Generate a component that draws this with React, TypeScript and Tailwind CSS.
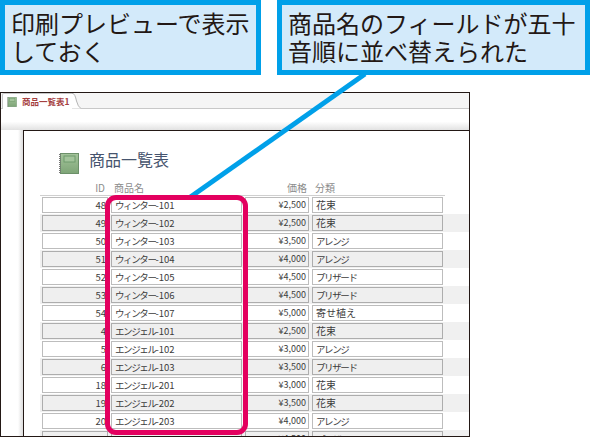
const jp = "font-['Noto_Sans_CJK_JP','Noto_Sans',sans-serif]";

const rows: [string, string, string, string, string][] = [
  ["48", "ウィンター", "-101", "¥2,500", "花束"],
  ["49", "ウィンター", "-102", "¥2,500", "花束"],
  ["50", "ウィンター", "-103", "¥3,500", "アレンジ"],
  ["51", "ウィンター", "-104", "¥4,000", "アレンジ"],
  ["52", "ウィンター", "-105", "¥4,500", "プリザード"],
  ["53", "ウィンター", "-106", "¥4,500", "プリザード"],
  ["54", "ウィンター", "-107", "¥5,000", "寄せ植え"],
  ["4", "エンジェル", "-101", "¥2,500", "花束"],
  ["5", "エンジェル", "-102", "¥3,000", "アレンジ"],
  ["6", "エンジェル", "-103", "¥3,500", "プリザード"],
  ["18", "エンジェル", "-201", "¥3,000", "花束"],
  ["19", "エンジェル", "-202", "¥3,500", "花束"],
  ["20", "エンジェル", "-203", "¥4,000", "アレンジ"],
  ["21", "エンジェル", "-204", "¥4,500", "プリザード"],
];

const Book = ({ className }: { className: string }) => (
  <svg viewBox="0 0 20 21" className={className}>
    <defs>
      <linearGradient id="cover" x1="0" y1="0" x2="0" y2="1">
        <stop offset="0" stopColor="#a4c49b" />
        <stop offset="1" stopColor="#7ea577" />
      </linearGradient>
    </defs>
    <rect x="1.5" y="0.5" width="18" height="20" fill="url(#cover)" stroke="#6c9069" />
    <rect x="5" y="3" width="11" height="6" fill="#a3c49b" stroke="#6f9a6c" />
    <path d="M1 1v19" stroke="#777" strokeWidth="2" strokeDasharray="1 1" />
  </svg>
);

const Callout = ({ lines, className }: { lines: string[]; className: string }) => (
  <div className={`h-[75px] border-[5px] border-[#00a0e9] bg-[#d3eafa] pl-[6px] pt-[4px] text-[24px] leading-[28px] text-[#231815] ${className}`}>
    {lines.map((line) => (
      <div key={line} className="whitespace-nowrap">
        {line}
      </div>
    ))}
  </div>
);

const Row = ({ row, striped }: { row: (typeof rows)[number]; striped: boolean }) => {
  const [id, kana, num, price, cat] = row;
  const box = striped
    ? "h-[16px] border border-[#adadad] bg-[#efefef]"
    : "h-[16px] border border-[#bdbdbd] bg-white";
  const kanaCat = cat !== "花束" && cat !== "寄せ植え";
  return (
    <div className={`flex h-[18px] shrink-0 gap-[3px] pl-[2px] pt-[1px] text-[9.5px] leading-[14px] text-[#3c3c3c] ${striped ? "bg-[#f0f0f0]" : ""}`}>
      <div className={`${box} w-[66px] pr-[1px] text-right`}>{id}</div>
      <div className={`${box} w-[131px] pl-[3px]`}>
        <span className="tracking-[-1.4px]">{kana}</span>
        {num}
      </div>
      <div className={`${box} w-[64px] pr-[2px] text-right text-[9px]`}>{price}</div>
      <div className={`${box} w-[131px] pl-[3px]`}>
        <span className={kanaCat ? "tracking-[-1.4px]" : "text-[10px]"}>{cat}</span>
      </div>
    </div>
  );
};

export default function App() {
  return (
    <div className={`relative h-[438px] w-[600px] overflow-hidden bg-white ${jp}`}>
      <div className="flex gap-[16px]">
        <Callout className="w-[261px]" lines={["印刷プレビューで表示", "しておく"]} />
        <Callout className="w-[313px]" lines={["商品名のフィールドが五十", "音順に並べ替えられた"]} />
      </div>

      <div className="mt-[17px] flex h-[345px] w-[470px] flex-col border border-[#231815]">
        <div className="flex h-[16px] shrink-0 border-b border-[#c8c8c8] bg-[#f5f5f5]">
          <div className="ml-[1px] flex h-[16px] w-[70px] items-center gap-[5px] rounded-tl-[2px] border-l border-t border-[#c8c8c8] bg-white pl-[4px]">
            <Book className="h-[10px] w-[10px]" />
            <span className="text-[8.5px] font-bold leading-none text-[#a5403f]">商品一覧表1</span>
          </div>
          <svg viewBox="0 0 9 16" className="h-[16px] w-[9px]">
            <path d="M0 0.5 H1 Q3 1 4.5 8 Q6 14 9 15.5 H0Z" fill="#fff" />
            <path d="M0 0.5 H1 Q3 1 4.5 8 Q6 14 9 15.5" fill="none" stroke="#b5b5b5" />
          </svg>
        </div>
        <div className="h-[21px] shrink-0 bg-gradient-to-b from-white from-60% to-[#e2e2e2]" />

        <div className="flex min-h-0 flex-1 bg-gradient-to-r from-white from-[17px] to-[#dcdcdc] to-[22px]">
          <div className="ml-[22px] flex min-w-0 flex-1 flex-col overflow-hidden border-l border-t border-[#231815] bg-white">
            <div className="flex h-[51px] shrink-0 items-start gap-[10px] pl-[35px] pt-[22px]">
              <Book className="h-[21px] w-[20px]" />
              <span className="text-[16px] leading-[12px] text-[#46546e]">商品一覧表</span>
            </div>
            <div className="ml-[16px] flex h-[14px] w-[405px] shrink-0 gap-[3px] border-b border-[#cfcfcf] pl-[2px] text-[10px] leading-[12px] text-[#8c8c8c]">
              <div className="w-[66px] pr-[3px] text-right">ID</div>
              <div className="w-[131px] pl-[3px]">商品名</div>
              <div className="w-[64px] pr-[2px] text-right">価格</div>
              <div className="w-[131px] pl-[3px]">分類</div>
            </div>
            <div className="ml-[16px] flex flex-col">
              {rows.map((row, i) => (
                <Row key={row[0]} row={row} striped={i % 2 === 1} />
              ))}
            </div>
          </div>
        </div>
      </div>

      {/* leader line and highlight frame sit on top of the report */}
      <svg viewBox="0 0 600 438" className="pointer-events-none absolute inset-0 h-[438px] w-[600px]">
        <line x1="365" y1="74" x2="189" y2="198" stroke="#00a0e9" strokeWidth="5" />
      </svg>
      <div className="pointer-events-none absolute left-[105px] top-[195px] h-[240px] w-[143px] rounded-[11px] border-[5px] border-[#e3005f]" />
    </div>
  );
}
